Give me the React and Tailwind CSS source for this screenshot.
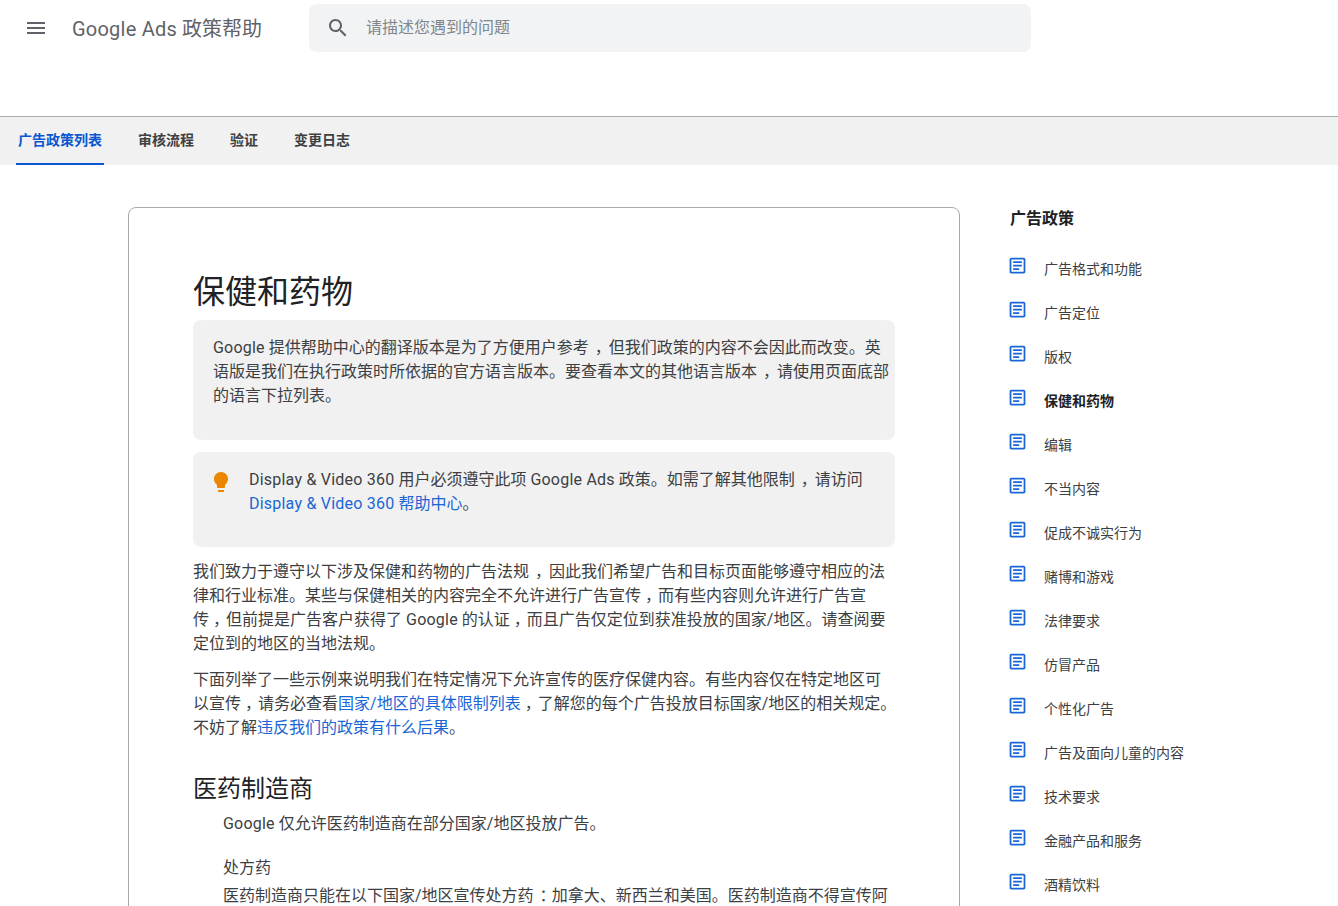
const MENU = "M3 18h18v-2H3v2zm0-5h18v-2H3v2zm0-7v2h18V6H3z";
const SEARCH = "M15.5 14h-.79l-.28-.27C15.41 12.59 16 11.11 16 9.5 16 5.91 13.09 3 9.5 3S3 5.91 3 9.5 5.91 16 9.5 16c1.61 0 3.09-.59 4.23-1.57l.27.28v.79l5 4.99L20.49 19l-4.99-5zm-6 0C7.01 14 5 11.99 5 9.5S7.01 5 9.5 5 14 7.01 14 9.5 11.99 14 9.5 14z";
const BULB = "M9 21c0 .55.45 1 1 1h4c.55 0 1-.45 1-1v-1H9v1zm3-19C8.14 2 5 5.14 5 9c0 2.38 1.19 4.47 3 5.74V17c0 .55.45 1 1 1h6c.55 0 1-.45 1-1v-2.26c1.81-1.27 3-3.36 3-5.74 0-3.86-3.14-7-7-7z";
const DOC = "M19 5v14H5V5h14m0-2H5c-1.1 0-2 .9-2 2v14c0 1.1.9 2 2 2h14c1.1 0 2-.9 2-2V5c0-1.1-.9-2-2-2zM14 17H7v-2h7v2zm3-4H7v-2h10v2zm0-4H7V7h10v2z";

function Icon({ d, className }) {
  return (
    <svg viewBox="0 0 24 24" fill="currentColor" className={className}>
      <path d={d} />
    </svg>
  );
}

const tabs = ["广告政策列表", "审核流程", "验证", "变更日志"];
const items = ["广告格式和功能", "广告定位", "版权", "保健和药物", "编辑", "不当内容", "促成不诚实行为", "赌博和游戏", "法律要求", "仿冒产品", "个性化广告", "广告及面向儿童的内容", "技术要求", "金融产品和服务", "酒精饮料"];

function C() {
  return <span className="pl-1.5 tracking-[-2px]">，</span>;
}

function Cn() {
  return <span className="pl-1 tracking-[-3px]">，</span>;
}

function L({ children }) {
  return <span className="tracking-[0.22px]">{children}</span>;
}

function A({ children }) {
  return <a className="text-[#1a66d6]">{children}</a>;
}

export default function App() {
  return (
    <div className="h-[906px] overflow-hidden bg-white font-['Roboto','Noto_Sans_CJK_SC',sans-serif] text-[#3c4043]">
      <header className="h-[117px] flex items-start pt-1 border-b border-[#aaaaaa]">
        <div className="h-12 flex items-center pl-6">
          <Icon d={MENU} className="w-6 h-6 text-[#5f6368]" />
          <span className="ml-6 mt-0.5 w-[237px] text-[20px] leading-7 whitespace-nowrap text-[#5f6368]"><L>Google Ads</L> 政策帮助</span>
        </div>
        <div className="h-12 w-[722px] bg-[#f1f3f4] rounded-lg flex items-center pl-[17px]">
          <Icon d={SEARCH} className="w-6 h-6 text-[#5f6368]" />
          <span className="ml-4 text-base text-[#80868b]">请描述您遇到的问题</span>
        </div>
      </header>

      <nav className="h-12 bg-[#f1f1f1] flex gap-8 pl-4">
        {tabs.map((t, i) => (
          <div key={t} className={`h-12 px-0.5 flex items-center text-sm font-semibold border-b-2 ${i === 0 ? "border-[#0b57d0] text-[#0b57d0]" : "border-transparent text-[#3c4043]"}`}>
            {t}
          </div>
        ))}
      </nav>

      <div className="flex pl-32 pt-[42px]">
        <main className="w-[832px] h-[800px] shrink-0 border border-[#aaaaaa] rounded-lg pt-16 px-16">
          <h1 className="text-[32px] leading-10 font-normal text-[#202124] mb-2">保健和药物</h1>
          <div className="bg-[#f1f1f1] rounded-lg pt-4 pb-8 pl-5 pr-1 text-base leading-6 whitespace-nowrap">
            <L>Google</L> 提供帮助中心的翻译版本是为了方便用户参考<C />但我们政策的内容不会因此而改变。英<br />
            语版是我们在执行政策时所依据的官方语言版本。要查看本文的其他语言版本<C />请使用页面底部<br />
            的语言下拉列表。
          </div>
          <div className="mt-3 bg-[#f1f1f1] rounded-lg pt-4 pb-[31px] pl-4 flex gap-4 text-base leading-6 whitespace-nowrap">
            <Icon d={BULB} className="w-6 h-6 mt-0.5 text-[#ea8600] shrink-0" />
            <div>
              <L>Display &amp; Video 360</L> 用户必须遵守此项 <L>Google Ads</L> 政策。如需了解其他限制<C />请访问<br />
              <A><L>Display &amp; Video 360</L> 帮助中心</A>。
            </div>
          </div>
          <p className="mt-[13px] text-base leading-6 whitespace-nowrap">
            我们致力于遵守以下涉及保健和药物的广告法规<C />因此我们希望广告和目标页面能够遵守相应的法<br />
            律和行业标准。某些与保健相关的内容完全不允许进行广告宣传<Cn />而有些内容则允许进行广告宣<br />
            传<Cn />但前提是广告客户获得了 <L>Google</L> 的认证<Cn />而且广告仅定位到获准投放的国家/地区。请查阅要<br />
            定位到的地区的当地法规。
          </p>
          <p className="mt-3 text-base leading-6 whitespace-nowrap">
            下面列举了一些示例来说明我们在特定情况下允许宣传的医疗保健内容。有些内容仅在特定地区可<br />
            以宣传<Cn />请务必查看<A>国家/地区的具体限制列表</A><Cn />了解您的每个广告投放目标国家/地区的相关规定。<br />
            不妨了解<A>违反我们的政策有什么后果</A>。
          </p>
          <h2 className="mt-[33px] text-2xl leading-8 font-normal text-[#202124]">医药制造商</h2>
          <div className="pl-[30px] text-base leading-6 whitespace-nowrap">
            <p className="mt-[7px]"><L>Google</L> 仅允许医药制造商在部分国家/地区投放广告。</p>
            <p className="mt-5">处方药</p>
            <p className="mt-1">医药制造商只能在以下国家/地区宣传处方药<span className="pl-1.5 tracking-[-4px]">：</span>加拿大、新西兰和美国。医药制造商不得宣传阿</p>
          </div>
        </main>

        <aside className="ml-[47px]">
          <h3 className="ml-[3px] mb-4 text-base leading-6 font-semibold text-[#202124]">广告政策</h3>
          <ul>
            {items.map((t) => (
              <li key={t} className="h-11 flex items-start gap-4 whitespace-nowrap">
                <Icon d={DOC} className="w-[21px] h-[21px] mt-[8px] text-[#1a66d6] shrink-0" />
                <span className={`mt-3 text-sm leading-5 ${t === "保健和药物" ? "font-semibold text-[#202124]" : "text-[#3c4043]"}`}>{t}</span>
              </li>
            ))}
          </ul>
        </aside>
      </div>
    </div>
  );
}
